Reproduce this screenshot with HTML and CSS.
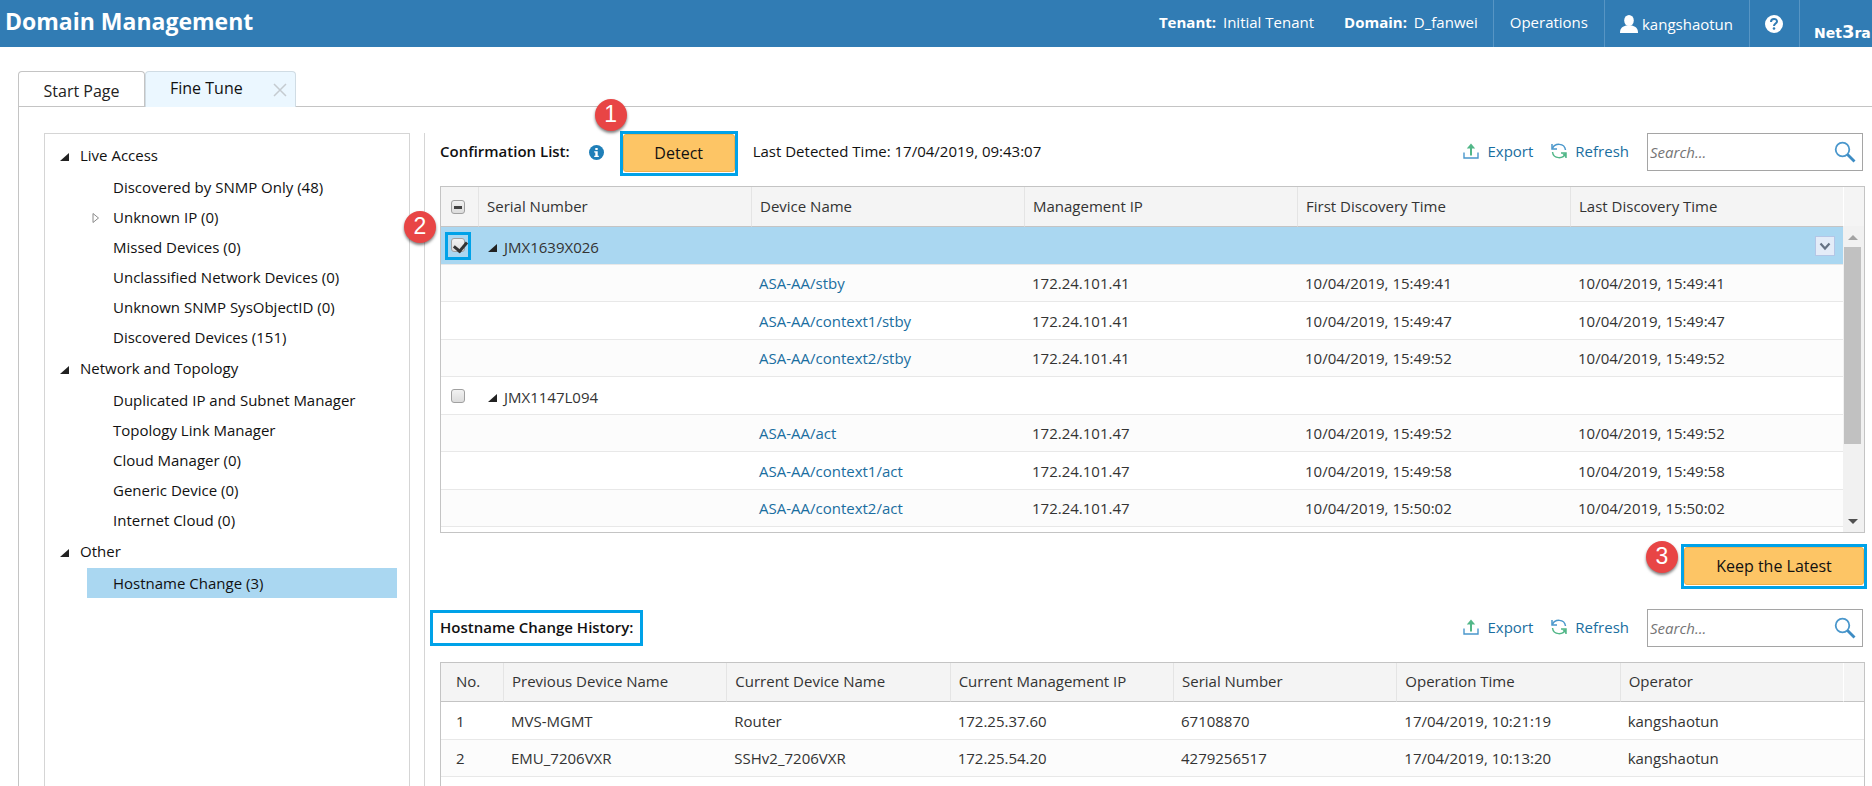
FILE: index.html
```html
<!DOCTYPE html>
<html lang="en">
<head>
  <meta charset="UTF-8" />
  <meta name="viewport" content="width=device-width, initial-scale=1.0" />
  <title>Domain Management</title>
  <link rel="stylesheet" href="styles.css">
</head>
<body>
  <!-- shared icons -->
  <svg class="sprite" aria-hidden="true">
    <symbol id="icon-export" viewBox="0 0 16 16">
      <path d="M1 9.5V15h14V9.5" fill="none" stroke="#4a97cc" stroke-width="1.4"/>
      <path d="M8 12.500V3" fill="none" stroke="#52b788" stroke-width="2"/>
      <path d="M3.800 5.500L8 .5l4.200 5z" fill="#52b788"/>
    </symbol>
    <symbol id="icon-refresh" viewBox="0 0 16 16">
      <g fill="none" stroke-width="1.500">
        <path d="M1 1v5h5" stroke="#4a97cc"/>
        <path d="M1.500 5.500C3.500 0 13.500-.5 14.500 7" stroke="#4a97cc"/>
        <path d="M15 15v-5h-5" stroke="#52b788"/>
        <path d="M14.500 10.500C12.500 16 2.500 16.500 1.500 9" stroke="#52b788"/>
        <path d="M11 10.500h4v4z" fill="#52b788" stroke="none"/>
      </g>
    </symbol>
    <symbol id="icon-search" viewBox="0 0 22 22">
      <circle cx="8.500" cy="8.500" r="6.800" fill="none" stroke="#4a97cc" stroke-width="1.800"/>
      <path d="M13.500 13.500L20.500 20.500" stroke="#3d8cc4" stroke-width="2.800"/>
    </symbol>
  </svg>

  <header class="topbar">
    <h1>Domain Management</h1>
    <div class="topbar-info"><b>Tenant:</b> Initial Tenant</div>
    <div class="topbar-info"><b>Domain:</b> D_fanwei</div>
    <a class="topbar-item" href="#">Operations</a>
    <a class="topbar-item user" href="#">
      <svg width="18" height="18" viewBox="0 0 18 18" fill="#fff"><ellipse cx="9" cy="5.500" rx="4.800" ry="5.500"/><path d="M0 18c0-5 2.500-6.500 6-7.500h6c3.500 1 6 2.500 6 7.500z"/></svg>
      kangshaotun
    </a>
    <a class="topbar-item help" href="#" aria-label="Help">
      <svg width="18" height="18" viewBox="0 0 18 18"><circle cx="9" cy="9" r="9" fill="#fff"/><path d="M6 7c0-4 6-4 6-.5 0 2-3 2.200-3 4.500" fill="none" stroke="#317cb4" stroke-width="2"/><circle cx="9" cy="13.500" r="1.300" fill="#317cb4"/></svg>
    </a>
    <div class="logo">Net<span>3</span>ra</div>
  </header>

  <nav class="tabs">
    <a class="tab" href="#">Start Page</a>
    <div class="tab active">
      <a href="#">Fine Tune</a>
      <button class="close" aria-label="Close tab">
        <svg width="14" height="14" viewBox="0 0 14 14"><path d="M1 1l12 12M13 1L1 13" stroke="#c5cbd0" stroke-width="1.500"/></svg>
      </button>
    </div>
  </nav>

  <main class="page">
    <aside class="tree">
      <ul>
        <li>
          <div class="group"><i class="arrow"></i>Live Access</div>
          <ul>
            <li class="leaf">Discovered by SNMP Only (48)</li>
            <li class="leaf">
              <svg class="closed" width="8" height="12" viewBox="0 0 8 12"><path d="M1 1.500v9L6.500 6z" fill="#fff" stroke="#8a8a8a"/></svg>Unknown IP (0)
            </li>
            <li class="leaf">Missed Devices (0)</li>
            <li class="leaf">Unclassified Network Devices (0)</li>
            <li class="leaf">Unknown SNMP SysObjectID (0)</li>
            <li class="leaf">Discovered Devices (151)</li>
          </ul>
        </li>
        <li>
          <div class="group"><i class="arrow"></i>Network and Topology</div>
          <ul>
            <li class="leaf">Duplicated IP and Subnet Manager</li>
            <li class="leaf">Topology Link Manager</li>
            <li class="leaf">Cloud Manager (0)</li>
            <li class="leaf">Generic Device (0)</li>
            <li class="leaf">Internet Cloud (0)</li>
          </ul>
        </li>
        <li>
          <div class="group"><i class="arrow"></i>Other</div>
          <ul>
            <li class="leaf selected">Hostname Change (3)</li>
          </ul>
        </li>
      </ul>
    </aside>

    <section class="content">
      <div class="toolbar">
        <h2>Confirmation List:</h2>
        <svg class="info" width="15" height="15" viewBox="0 0 15 15"><circle cx="7.500" cy="7.500" r="7.500" fill="#1f7fb8"/><path d="M6.300 3h2.400v2H6.300zM5.200 6.200h3.500v4.600h1.100V12H5.200v-1.200h1.100V7.400H5.200z" fill="#fff"/></svg>
        <div class="callout">
          <button class="primary detect">Detect</button>
          <span class="step">1</span>
        </div>
        <span class="detected">Last Detected Time: 17/04/2019, 09:43:07</span>
        <div class="actions">
          <button class="link"><svg width="16" height="16"><use href="#icon-export"/></svg>Export</button>
          <button class="link"><svg width="16" height="16"><use href="#icon-refresh"/></svg>Refresh</button>
          <div class="search">
            <input type="text" placeholder="Search..." aria-label="Search confirmation list">
            <button aria-label="Search"><svg width="22" height="22"><use href="#icon-search"/></svg></button>
          </div>
        </div>
      </div>

      <div class="grid-wrap">
        <div class="grid confirm">
          <table>
            <colgroup><col class="col-check"><col><col><col><col><col><col class="col-scroll"></colgroup>
            <thead>
              <tr>
                <th class="check"><input type="checkbox" class="some" aria-label="Select all"></th>
                <th>Serial Number</th><th>Device Name</th><th>Management IP</th><th>First Discovery Time</th><th>Last Discovery Time</th><th></th>
              </tr>
            </thead>
            <tbody>
              <tr class="parent selected">
                <td class="check"><span class="mark"><input type="checkbox" checked aria-label="Select JMX1639X026"></span></td>
                <td><i class="arrow"></i>JMX1639X026</td><td></td><td></td><td></td>
                <td class="menu-cell"><button class="menu" aria-label="Row menu"><svg width="12" height="9" viewBox="0 0 12 9"><path d="M1.500 1.500L6 6.500l4.500-5" fill="none" stroke="#667385" stroke-width="2.200"/></svg></button></td><td></td>
              </tr>
              <tr><td></td><td></td><td><a href="#">ASA-AA/stby</a></td><td>172.24.101.41</td><td>10/04/2019, 15:49:41</td><td>10/04/2019, 15:49:41</td><td></td></tr>
              <tr><td></td><td></td><td><a href="#">ASA-AA/context1/stby</a></td><td>172.24.101.41</td><td>10/04/2019, 15:49:47</td><td>10/04/2019, 15:49:47</td><td></td></tr>
              <tr><td></td><td></td><td><a href="#">ASA-AA/context2/stby</a></td><td>172.24.101.41</td><td>10/04/2019, 15:49:52</td><td>10/04/2019, 15:49:52</td><td></td></tr>
              <tr class="parent">
                <td class="check"><input type="checkbox" aria-label="Select JMX1147L094"></td>
                <td><i class="arrow"></i>JMX1147L094</td><td></td><td></td><td></td><td></td><td></td>
              </tr>
              <tr><td></td><td></td><td><a href="#">ASA-AA/act</a></td><td>172.24.101.47</td><td>10/04/2019, 15:49:52</td><td>10/04/2019, 15:49:52</td><td></td></tr>
              <tr><td></td><td></td><td><a href="#">ASA-AA/context1/act</a></td><td>172.24.101.47</td><td>10/04/2019, 15:49:58</td><td>10/04/2019, 15:49:58</td><td></td></tr>
              <tr><td></td><td></td><td><a href="#">ASA-AA/context2/act</a></td><td>172.24.101.47</td><td>10/04/2019, 15:50:02</td><td>10/04/2019, 15:50:02</td><td></td></tr>
              <tr><td></td><td></td><td></td><td></td><td></td><td></td><td></td></tr>
            </tbody>
          </table>
          <div class="scrollbar">
            <i class="up"></i>
            <div class="thumb"></div>
            <i class="down"></i>
          </div>
        </div>
        <span class="step row-step">2</span>
      </div>

      <div class="footer-actions">
        <div class="callout">
          <button class="primary keep">Keep the Latest</button>
          <span class="step">3</span>
        </div>
      </div>

      <div class="toolbar">
        <h2 class="boxed">Hostname Change History:</h2>
        <div class="actions">
          <button class="link"><svg width="16" height="16"><use href="#icon-export"/></svg>Export</button>
          <button class="link"><svg width="16" height="16"><use href="#icon-refresh"/></svg>Refresh</button>
          <div class="search">
            <input type="text" placeholder="Search..." aria-label="Search history">
            <button aria-label="Search"><svg width="22" height="22"><use href="#icon-search"/></svg></button>
          </div>
        </div>
      </div>

      <div class="grid history">
        <table>
          <colgroup><col class="col-no"><col><col><col><col><col><col><col class="col-scroll"></colgroup>
          <thead>
            <tr><th>No.</th><th>Previous Device Name</th><th>Current Device Name</th><th>Current Management IP</th><th>Serial Number</th><th>Operation Time</th><th>Operator</th><th></th></tr>
          </thead>
          <tbody>
            <tr><td>1</td><td>MVS-MGMT</td><td>Router</td><td>172.25.37.60</td><td>67108870</td><td>17/04/2019, 10:21:19</td><td>kangshaotun</td><td></td></tr>
            <tr><td>2</td><td>EMU_7206VXR</td><td>SSHv2_7206VXR</td><td>172.25.54.20</td><td>4279256517</td><td>17/04/2019, 10:13:20</td><td>kangshaotun</td><td></td></tr>
          </tbody>
        </table>
      </div>
    </section>
  </main>
</body>
</html>
```
FILE: styles.css
```css
* {
  box-sizing: border-box;
}

body {
  margin: 0;
  height: 100vh;
  display: flex;
  flex-direction: column;
  overflow: hidden;
  background: #fff;
  color: #111;
  font-family: "Open Sans", "Noto Sans", sans-serif;
  font-size: 15px;
  line-height: 20px;
}

a {
  color: #1a6ea0;
  text-decoration: none;
}

button {
  font: inherit;
  cursor: pointer;
}

ul {
  list-style: none;
  margin: 0;
  padding: 0;
}

.sprite {
  display: none;
}

/* top bar */
.topbar {
  display: flex;
  flex: none;
  height: 47px;
  padding-left: 5px;
  overflow: hidden;
  background: #317cb4;
  color: #fff;
  line-height: 44px;
  white-space: nowrap;
}

.topbar h1 {
  flex: 1;
  margin: 0;
  font-size: 23px;
  line-height: 42px;
}

.topbar-info {
  margin-right: 30px;
}

.topbar-info b {
  margin-right: 3px;
}

.topbar-info + .topbar-item {
  margin-left: -15px;
}

.topbar-item {
  display: flex;
  height: 47px;
  padding: 0 16px;
  border-left: 1px solid #5795c4;
  color: #fff;
}

.topbar-item.user {
  align-items: center;
  gap: 4px;
  padding: 1px 16px 0 15px;
}

.topbar-item.help {
  align-items: center;
  padding: 0 16px 0 15px;
}

.logo {
  width: 73px;
  padding: 10px 0 0 14px;
  border-left: 1px solid #5795c4;
  font-family: "DejaVu Sans", sans-serif;
  font-size: 14px;
  font-weight: bold;
  line-height: 44px;
}

.logo span {
  font-size: 18px;
}

/* tabs */
.tabs {
  display: flex;
  align-items: flex-end;
  flex: none;
  height: 60px;
  margin-left: 18px;
  border-bottom: 1px solid #c4c4c4;
  font-size: 16px;
}

.tab {
  width: 127px;
  height: 35px;
  padding-top: 2px;
  border: 1px solid #c4c4c4;
  border-bottom: 0;
  border-radius: 4px 4px 0 0;
  color: #222;
  line-height: 34px;
  text-align: center;
}

.tab.active {
  display: flex;
  align-items: center;
  justify-content: space-between;
  width: 151px;
  height: 36px;
  margin-bottom: -1px;
  padding: 0 8px 0 24px;
  border-color: #d0dce4;
  background: #ebf7ff;
}

.tab.active a {
  padding-bottom: 3px;
  color: #111;
}

.close {
  display: flex;
  padding: 0;
  border: 0;
  background: none;
}

/* page */
.page {
  display: flex;
  flex: 1;
  min-height: 0;
  margin-left: 18px;
  padding: 26px 7px 0 25px;
  border-left: 1px solid #c4c4c4;
}

.tree {
  flex: none;
  width: 366px;
  padding: 5px 12px 0 15px;
  border: 1px solid #d5d5d5;
  border-bottom: 0;
  line-height: 30px;
}

.group {
  display: flex;
  align-items: center;
  gap: 11px;
  margin: 1px 0 2px;
}

.arrow {
  display: inline-block;
  border-left: 9px solid transparent;
  border-bottom: 8px solid #222;
}

.group .arrow {
  margin-top: 3px;
}

.leaf {
  position: relative;
  margin-left: 27px;
  padding-left: 26px;
}

.leaf.selected {
  background: #aad7f1;
}

.closed {
  position: absolute;
  left: 5px;
  top: 10px;
}

.content {
  display: flex;
  flex: 1;
  flex-direction: column;
  min-width: 0;
  margin-left: 14px;
  padding-left: 15px;
  border-left: 1px solid #d5d5d5;
}

/* toolbars */
.toolbar {
  display: flex;
  align-items: center;
  flex: none;
  height: 38px;
  margin-bottom: 15px;
}

.toolbar h2 {
  margin: 0;
  padding-bottom: 2px;
  font-size: 15px;
  font-weight: 600;
  line-height: 20px;
}

.detected {
  padding-bottom: 2px;
}

.info {
  margin: 0 16px 0 19px;
}

.callout {
  position: relative;
  padding-bottom: 1px;
  border: 3px solid #00a2e8;
}

.toolbar .callout {
  margin: 2px 15px 0 0;
}

.primary {
  display: block;
  height: 38px;
  border: 1px solid #efb04c;
  border-radius: 3px;
  background: #fdc565;
  color: #111;
  font-size: 16px;
}

.detect {
  width: 112px;
}

.keep {
  width: 180px;
}

.step {
  position: absolute;
  left: -28px;
  top: -35px;
  width: 32px;
  height: 32px;
  border-radius: 50%;
  background: #e84545;
  box-shadow: 0 2px 3px rgba(0, 0, 0, 0.5);
  color: #fff;
  font-family: "Liberation Sans", Arial, sans-serif;
  font-size: 23px;
  line-height: 31px;
  text-align: center;
}

.keep + .step {
  left: -38px;
  top: -6px;
}

.actions {
  display: flex;
  align-items: center;
  gap: 18px;
  margin-left: auto;
  margin-right: 2px;
}

.link {
  display: flex;
  align-items: center;
  gap: 8px;
  padding: 0 0 3px;
  border: 0;
  background: none;
  color: #1a6ea0;
}

.search {
  display: flex;
  align-items: center;
  width: 216px;
  height: 38px;
  padding: 0 6px 0 2px;
  border: 1px solid #a5a5a5;
}

.search input {
  flex: 1;
  min-width: 0;
  padding: 0;
  border: 0;
  outline: 0;
  font: inherit;
}

.search input::placeholder {
  color: #757575;
  font-style: italic;
}

.search button {
  display: flex;
  padding: 0;
  border: 0;
  background: none;
}

/* grids */
.grid-wrap {
  position: relative;
}

.grid {
  position: relative;
  overflow: hidden;
  border: 1px solid #c4c4c4;
}

.grid.confirm {
  height: 347px;
}

table {
  width: 100%;
  table-layout: fixed;
  border-collapse: separate;
  border-spacing: 0;
  color: #333;
}

.col-check {
  width: 38px;
}

.col-no {
  width: 63px;
}

.col-scroll {
  width: 20px;
}

th {
  height: 39px;
  padding: 0 8px 2px;
  border-right: 1px solid #e4e4e4;
  border-bottom: 1px solid #c4c4c4;
  background: #f4f4f4;
  font-weight: normal;
  text-align: left;
}

th:last-child {
  border-right: 0;
}

th:nth-last-child(2) {
  border-right-color: #fff;
}

td {
  height: 37px;
  padding: 0 7px;
  border-bottom: 1px solid #e8e8e8;
}

tbody tr:nth-child(odd) td {
  height: 38px;
}

tbody tr:nth-child(even) {
  background: #fcfcfc;
}

.parent td {
  padding-top: 3px;
}

.parent.selected {
  background: #aad7f1;
}

/* hairline between the header and the first row */
.confirm thead tr {
  height: 40px;
}

.parent .arrow {
  margin: 0 7px 1px 2px;
}

th.check,
td.check,
.parent td.check {
  padding: 0 4px 0 0;
}

.check input {
  appearance: none;
  display: block;
  width: 14px;
  height: 14px;
  margin: 0 auto;
  border: 1px solid #a0a0a0;
  border-radius: 3px;
  background: linear-gradient(#f2f2f2, #dcdcdc);
}

.check .some::before {
  content: "";
  display: block;
  width: 8px;
  height: 3px;
  margin: 5px 2px;
  background: #444;
}

.check input:checked::before {
  content: "";
  display: block;
  width: 6px;
  height: 10px;
  margin: 0 0 0 4px;
  border: solid #333;
  border-width: 0 3px 3px 0;
  transform: rotate(40deg);
}

.mark {
  display: block;
  width: 26px;
  height: 28px;
  margin: 0 auto;
  padding-top: 3px;
  border: 3px solid #00a2e8;
}

.menu-cell {
  text-align: right;
}

.parent .menu-cell {
  padding: 0 9px;
}

.menu {
  display: inline-flex;
  align-items: center;
  justify-content: center;
  width: 20px;
  height: 20px;
  padding: 0;
  border: 1px solid #b4c6e6;
  background: #e4ecf8;
  vertical-align: middle;
}

.scrollbar {
  position: absolute;
  top: 39px;
  right: 0;
  bottom: 0;
  display: flex;
  flex-direction: column;
  align-items: center;
  width: 21px;
  padding: 9px 3px 8px 1px;
  background: #f1f1f1;
}

.up {
  border: 5px solid transparent;
  border-top: 0;
  border-bottom-color: #a3a3a3;
}

.thumb {
  width: 17px;
  height: 197px;
  margin: 7px 0 auto;
  background: #c1c1c1;
}

.down {
  border: 5px solid transparent;
  border-bottom: 0;
  border-top-color: #505050;
}

.row-step {
  left: -36px;
  top: 25px;
}

.footer-actions {
  display: flex;
  justify-content: flex-end;
  margin: 11px -2px 20px 0;
}

.toolbar .boxed {
  margin-left: -10px;
  padding: 4px 7px 6px;
  border: 3px solid #00a2e8;
}

.history {
  flex: 1;
  min-height: 0;
  border-bottom: 0;
}

.history th:first-child,
.history td:first-child {
  padding-left: 15px;
}
```
